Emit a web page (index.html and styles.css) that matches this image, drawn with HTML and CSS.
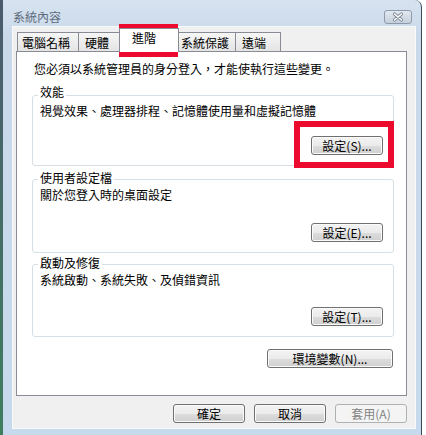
FILE: index.html
```html
<!DOCTYPE html>
<html>
<head>
<meta charset="utf-8">
<link rel="stylesheet" href="styles.css">
</head>
<body>
<div class="screen">
  <div class="desk"></div>
  <div class="window">
    <div class="titlebar">
      <span class="title">系統內容</span>
      <svg class="close" width="28" height="14" viewBox="0 0 28 14">
        <defs>
          <linearGradient id="cg" x1="0" y1="0" x2="0" y2="1">
            <stop offset="0" stop-color="#e4eaf1"/>
            <stop offset="0.5" stop-color="#d3dce6"/>
            <stop offset="1" stop-color="#c3cfdc"/>
          </linearGradient>
        </defs>
        <rect x="0.5" y="0.5" width="27" height="13" rx="2.5" fill="url(#cg)" stroke="#8c9aab"/>
        <path d="M10.5 4 L17.5 10 M17.5 4 L10.5 10" stroke="#7c8796" stroke-width="3.2" stroke-linecap="round"/>
        <path d="M10.5 4 L17.5 10 M17.5 4 L10.5 10" stroke="#ffffff" stroke-width="1.6" stroke-linecap="round"/>
      </svg>
    </div>
    <div class="client">
      <div class="tabs">
        <div class="tab t1">電腦名稱</div>
        <div class="tab t2">硬體</div>
        <div class="tab sel t3">進階</div>
        <div class="tab t4">系統保護</div>
        <div class="tab t5">遠端</div>
      </div>
      <div class="panel">
        <p class="intro">您必須以系統管理員的身分登入，才能使執行這些變更。</p>
        <div class="group g1">
          <span class="legend">效能</span>
          <p class="desc">視覺效果、處理器排程、記憶體使用量和虛擬記憶體</p>
          <div class="btnrow"><button class="btn">設定(S)...</button></div>
        </div>
        <div class="group g2">
          <span class="legend">使用者設定檔</span>
          <p class="desc">關於您登入時的桌面設定</p>
          <div class="btnrow"><button class="btn">設定(E)...</button></div>
        </div>
        <div class="group g3">
          <span class="legend">啟動及修復</span>
          <p class="desc">系統啟動、系統失敗、及偵錯資訊</p>
          <div class="btnrow"><button class="btn">設定(T)...</button></div>
        </div>
        <div class="btnrow env"><button class="btn wide">環境變數(N)...</button></div>
      </div>
      <div class="actions">
        <button class="btn">確定</button>
        <button class="btn">取消</button>
        <button class="btn" disabled>套用(A)</button>
      </div>
    </div>
  </div>
</div>
<div class="mark mark-tab"></div>
<div class="mark mark-btn"></div>
</body>
</html>
```
FILE: styles.css
```css
* { box-sizing: border-box; }
html, body { margin: 0; padding: 0; }
body {
  width: 426px;
  height: 435px;
  overflow: hidden;
  background: #fff;
  font-family: "Noto Sans CJK TC", "Noto Sans", sans-serif;
  font-size: 12px;
  line-height: 16px;
  color: #000;
  position: relative;
}
p { margin: 0; }

.screen { display: flex; height: 435px; }
.desk { width: 3px; background: linear-gradient(#4b5a6e, #3e7e5e); }

.window {
  width: 419px;
  display: flex;
  flex-direction: column;
  padding: 0 5px 6px 9px;
  background: linear-gradient(180deg, #d6e2ef 0, #c9d9ea 40px, #c7d9ec 100%);
  border-right: 1px solid #3c4a58;
  border-top-right-radius: 7px;
}
.titlebar { height: 27px; display: flex; align-items: flex-start; }
.title { margin: 9px 0 0 1px; color: #5d6c7c; }
.close { margin: 10px 4px 0 auto; display: block; }

.client {
  flex: 1;
  background: #f0f0f0;
  box-shadow: inset 0 0 0 1px #f7f9fb;
  padding: 6px 9px 6px 4px;
  display: flex;
  flex-direction: column;
}

.tabs { display: flex; align-items: flex-end; height: 19px; padding-left: 1px; }
.tab {
  height: 19px;
  border: 1px solid #898c95;
  border-bottom: none;
  background: linear-gradient(#f6f6f6, #e4e4e4);
  padding-top: 2px;
  white-space: nowrap;
}
.tab + .tab { margin-left: -1px; }
.t1 { width: 62px; padding-left: 4px; }
.t2 { width: 42px; padding-left: 6px; }
.t3 { width: 60px; padding-left: 12px; }
.t4 { width: 58px; padding-left: 2px; }
.t5 { width: 46px; padding-left: 6px; }
.tab.sel {
  position: relative;
  z-index: 1;
  height: 24px;
  margin-bottom: -1px;
  background: #fff;
  padding-top: 1px;
}

.panel {
  height: 345px;
  border: 1px solid #898c95;
  background: #fff;
  padding: 9px 12px 0 15px;
}
.intro { margin-left: 2px; }

.group {
  position: relative;
  width: 362px;
  border: 1px solid #d5dfe5;
  border-radius: 3px;
  padding: 7px 10px 10px 7px;
  display: flex;
  flex-direction: column;
}
.g1 { height: 71px; margin-top: 18px; }
.g2 { height: 74px; margin-top: 13px; }
.g3 { height: 73px; margin-top: 11px; }
.legend {
  position: absolute;
  left: 5px;
  top: -12px;
  padding: 0 2px;
  background: #fff;
}
.g2 .legend, .g3 .legend { top: -10px; }
.btnrow { display: flex; justify-content: flex-end; margin-top: auto; }
.env { margin-top: 12px; margin-right: 1px; }

.btn {
  width: 72px;
  height: 19px;
  padding: 0;
  border: 1px solid #707070;
  border-radius: 3px;
  background: linear-gradient(#f3f3f3 0%, #ebebeb 50%, #dddddd 50%, #cfcfcf 100%);
  box-shadow: inset 0 0 0 1px #fbfbfb;
  font: inherit;
  line-height: 16px;
  color: #000;
}
.btn.wide { width: 126px; }
.btn:disabled {
  border-color: #adb2b5;
  background: #f4f4f4;
  box-shadow: none;
  color: #838383;
}

.actions {
  display: flex;
  justify-content: flex-end;
  gap: 9px;
  margin-top: 8px;
}

.mark {
  position: absolute;
  border: 6px solid #ec0a2e;
}
.mark-tab { left: 119px; top: 24px; width: 59px; height: 33px; }
.mark-btn { left: 294px; top: 121px; width: 100px; height: 47px; }
```
